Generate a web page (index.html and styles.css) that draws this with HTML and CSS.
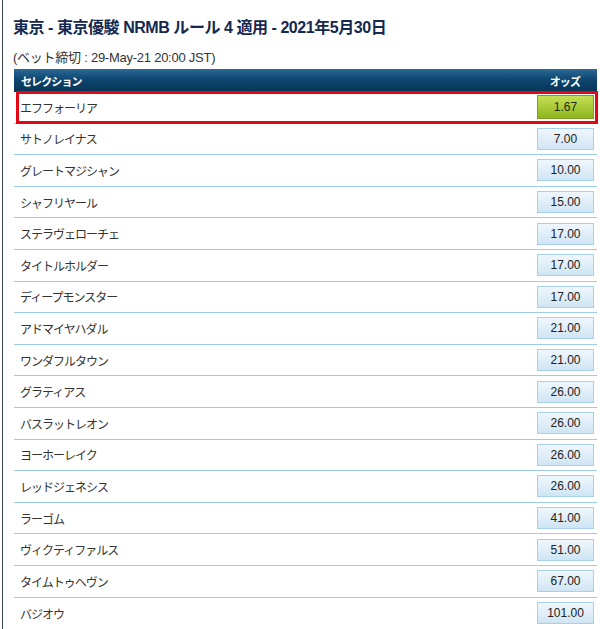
FILE: index.html
```html
<!DOCTYPE html>
<html lang="ja">
<head>
<meta charset="utf-8">
<link rel="stylesheet" href="styles.css">
</head>
<body>
<div class="page">
  <h1 class="title">東京 - 東京優駿 NRMB ルール 4 適用 - 2021年5月30日</h1>
  <p class="deadline">(ベット締切 : 29-May-21 20:00 JST)</p>
  <div class="market">
    <div class="head"><span>セレクション</span><span>オッズ</span></div>
    <div class="row highlight"><span class="name">エフフォーリア</span><span class="odds fav">1.67</span></div>
    <div class="row"><span class="name">サトノレイナス</span><span class="odds">7.00</span></div>
    <div class="row"><span class="name">グレートマジシャン</span><span class="odds">10.00</span></div>
    <div class="row"><span class="name">シャフリヤール</span><span class="odds">15.00</span></div>
    <div class="row"><span class="name">ステラヴェローチェ</span><span class="odds">17.00</span></div>
    <div class="row"><span class="name">タイトルホルダー</span><span class="odds">17.00</span></div>
    <div class="row"><span class="name">ディープモンスター</span><span class="odds">17.00</span></div>
    <div class="row"><span class="name">アドマイヤハダル</span><span class="odds">21.00</span></div>
    <div class="row"><span class="name">ワンダフルタウン</span><span class="odds">21.00</span></div>
    <div class="row"><span class="name">グラティアス</span><span class="odds">26.00</span></div>
    <div class="row"><span class="name">バスラットレオン</span><span class="odds">26.00</span></div>
    <div class="row"><span class="name">ヨーホーレイク</span><span class="odds">26.00</span></div>
    <div class="row"><span class="name">レッドジェネシス</span><span class="odds">26.00</span></div>
    <div class="row"><span class="name">ラーゴム</span><span class="odds">41.00</span></div>
    <div class="row"><span class="name">ヴィクティファルス</span><span class="odds">51.00</span></div>
    <div class="row"><span class="name">タイムトゥヘヴン</span><span class="odds">67.00</span></div>
    <div class="row"><span class="name">バジオウ</span><span class="odds">101.00</span></div>
  </div>
</div>
</body>
</html>
```
FILE: styles.css
```css
html, body {
  margin: 0;
  padding: 0;
  background: #fff;
}
body {
  padding-left: 2px;
  font-family: "Liberation Sans", "Noto Sans CJK JP", sans-serif;
  color: #333;
}
.page {
  border-left: 1px solid #3a4656;
  min-height: 629px;
  padding: 18px 3px 0 10px;
  box-sizing: border-box;
}
.title {
  margin: 0;
  font-size: 16px;
  line-height: 20px;
  font-weight: bold;
  color: #15284e;
  letter-spacing: -0.45px;
}
.deadline {
  margin: 12px 0 0;
  font-size: 13px;
  line-height: 15px;
  color: #333;
  letter-spacing: -0.25px;
}
.market {
  margin: 4px 0 0 1px;
  width: 583px;
}
.head {
  display: flex;
  justify-content: space-between;
  height: 23px;
  padding: 0 17px 0 7px;
  align-items: center;
  background: linear-gradient(#2c6a98 0%, #0e4670 45%, #083456 100%);
  color: #fff;
  font-weight: bold;
  font-size: 11px;
  letter-spacing: -0.9px;
}
.row {
  display: flex;
  justify-content: space-between;
  align-items: center;
  height: 31.6px;
  box-sizing: border-box;
  border-bottom: 1px solid #9dcbea;
  padding: 0 3px 0 6px;
  font-size: 12px;
  color: #333;
}
.row:last-child {
  border-bottom: none;
}
.highlight {
  position: relative;
}
.highlight::after {
  content: "";
  position: absolute;
  left: 2px;
  right: -1px;
  top: -1px;
  bottom: -1px;
  border: 3px solid #e30613;
}
.name {
  letter-spacing: -1px;
}
.odds {
  width: 57px;
  height: 22px;
  box-sizing: border-box;
  display: flex;
  align-items: center;
  justify-content: center;
  border: 1px solid #a9d0ea;
  background: linear-gradient(#f0f7fc, #cfe5f4);
  color: #222;
  font-size: 12px;
}
.odds.fav {
  height: 24px;
  border-color: #7d9c28;
  background: linear-gradient(#c6df55, #8fb51f);
  color: #1d2a08;
}
```
